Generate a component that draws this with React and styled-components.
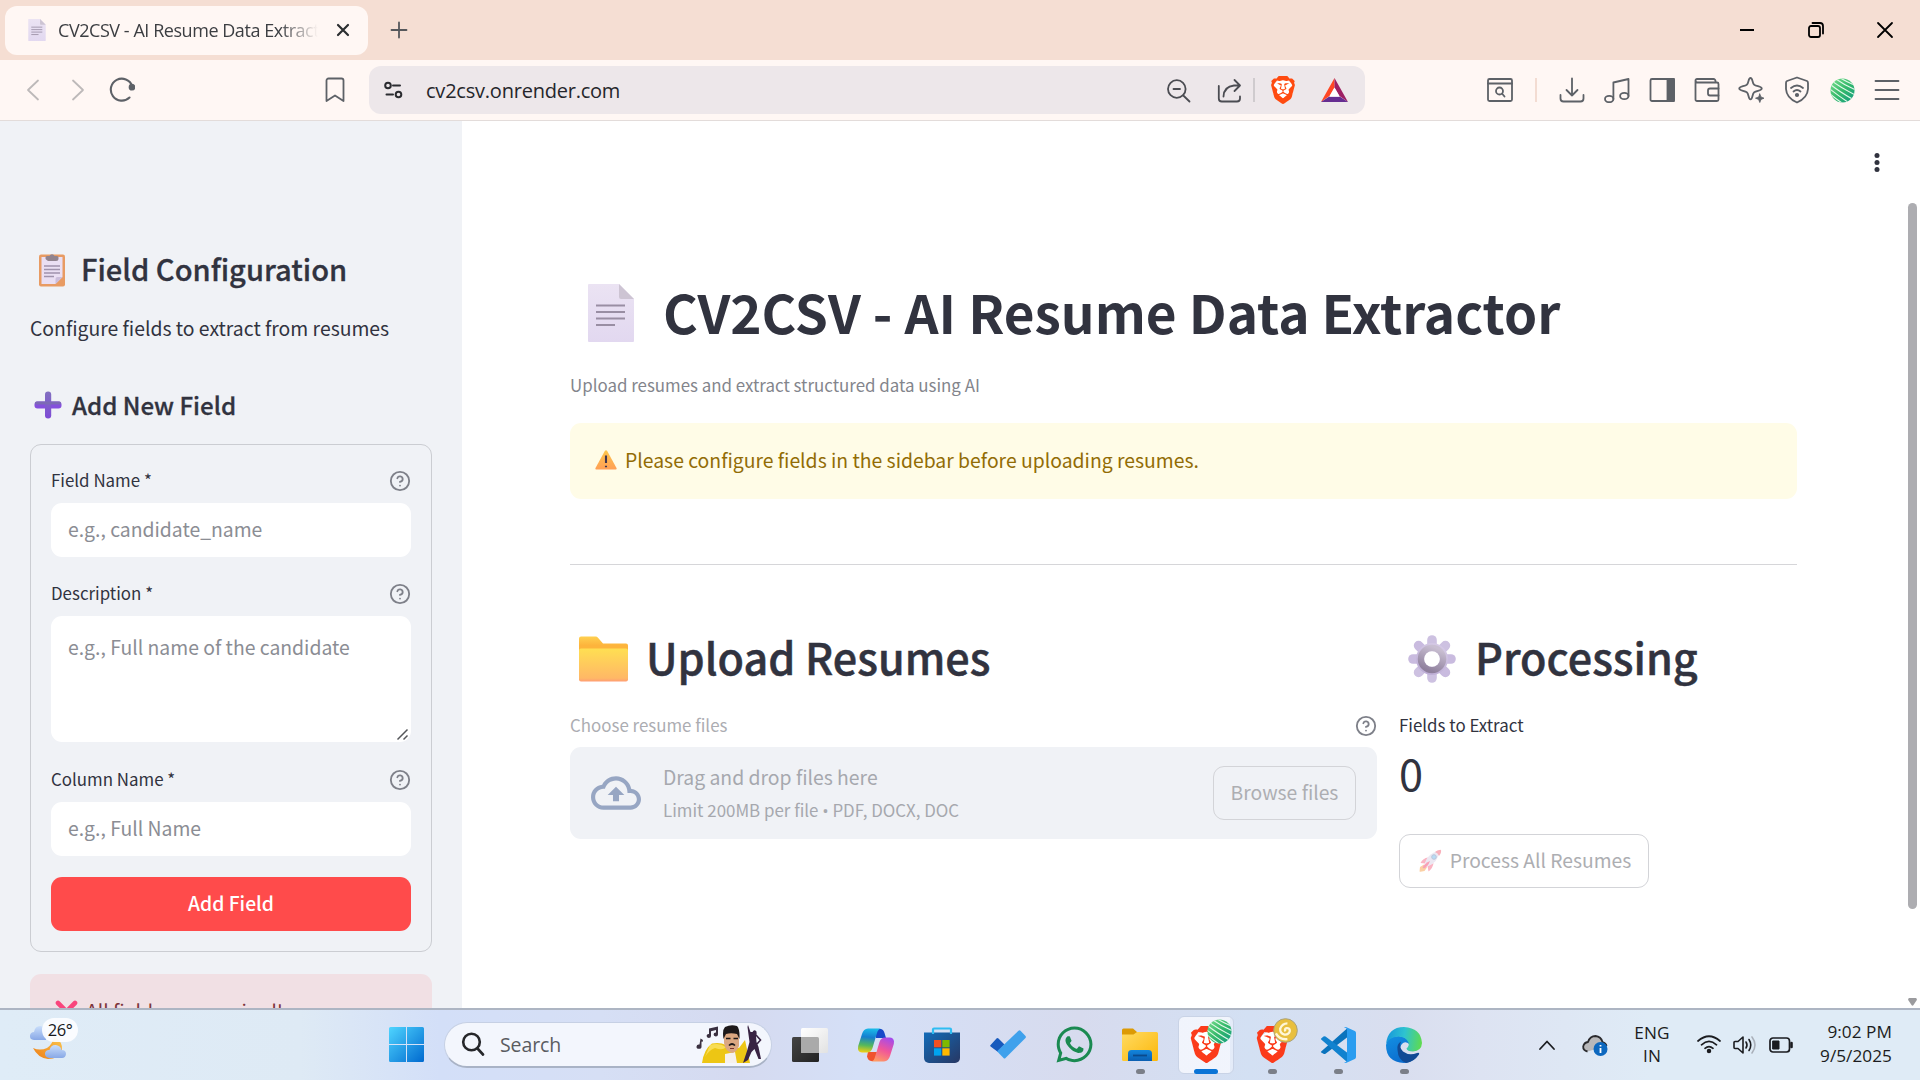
import React from "react";
import styled, { createGlobalStyle, css } from "styled-components";
import { SiBrave } from "react-icons/si";
import { FaWhatsapp } from "react-icons/fa";

const APP_FONT = '"Noto Sans CJK SC", "Noto Sans", sans-serif';
const SHELL_FONT = '"Open Sans", "Noto Sans", sans-serif';

const GlobalStyle = createGlobalStyle`
  * { box-sizing: border-box; }
  html, body { margin: 0; padding: 0; overflow: hidden; background: #fff; }
  svg { display: block; flex: none; }
  button, input, textarea { font: inherit; margin: 0; }
`;

const Screen = styled.div`
  width: 1920px;
  height: 1080px;
  display: flex;
  flex-direction: column;
  overflow: hidden;
  font-family: ${SHELL_FONT};
`;

/* ---------- browser chrome ---------- */

const TabStrip = styled.header`
  height: 60px;
  flex: none;
  display: flex;
  align-items: center;
  background: #f5ded3;
  padding-left: 5px;
`;

const Tab = styled.div`
  width: 363px;
  height: 49px;
  display: flex;
  align-items: center;
  padding: 0 16px 0 23px;
  border-radius: 12px;
  background: #fff7f4;
`;

const TabTitle = styled.span`
  width: 260px;
  margin-left: 12px;
  overflow: hidden;
  white-space: nowrap;
  font-size: 18px;
  letter-spacing: -0.45px;
  line-height: 26px;
  color: #3c3e42;
  mask-image: linear-gradient(90deg, #000 85%, transparent 100%);
`;

const TabClose = styled.span`
  margin-left: 18px;
`;

const NewTab = styled.span`
  margin-left: 22px;
`;

const WindowControls = styled.div`
  display: flex;
  align-items: center;
  margin-left: auto;
  padding-right: 26px;
  gap: 51px;
`;

const Toolbar = styled.nav`
  height: 61px;
  flex: none;
  display: flex;
  align-items: center;
  background: #fff7f4;
  border-bottom: 1px solid #e3dcda;
  padding-left: 18px;
`;

const Slot = styled.span`
  width: ${(p) => p.$w || 30}px;
  height: 30px;
  flex: none;
  display: flex;
  align-items: center;
  justify-content: center;
  margin-left: ${(p) => p.$gap || 0}px;
  color: ${(p) => p.$tone || "#5d6167"};
`;

const AddressBar = styled.div`
  width: 996px;
  height: 48px;
  display: flex;
  align-items: center;
  margin-left: 19px;
  padding: 0 16px 0 9px;
  border-radius: 12px;
  background: #ede7ea;
`;

const Address = styled.span`
  flex: 1;
  margin-left: 18px;
  padding-top: 1px;
  font-size: 20px;
  letter-spacing: -0.22px;
  line-height: 30px;
  color: #25262b;
`;

const Divider = styled.span`
  width: 2px;
  height: 24px;
  margin-left: ${(p) => p.$gap}px;
  background: ${(p) => p.$color};
`;

/* ---------- page ---------- */

const Page = styled.div`
  height: 887px;
  flex: none;
  display: flex;
  overflow: hidden;
  font-family: ${APP_FONT};
  color: #31333f;
`;

const Sidebar = styled.aside`
  width: 462px;
  flex: none;
  background: #f0f2f6;
  padding: 127px 30px 0;
`;

const heading = css`
  display: flex;
  align-items: center;
  margin: 0;
  font-weight: 500;
  white-space: nowrap;
  -webkit-text-stroke: ${(p) => p.$stroke || 0.3}px #31333f;
  svg { -webkit-text-stroke: 0; }
`;

const SideTitle = styled.h2`
  ${heading}
  padding-left: 8px;
  gap: 15px;
  font-size: 29.1px;
  line-height: 40px;
  height: 40px;
  svg { margin-top: 4px; }
`;

const SideText = styled.p`
  margin: 24px 0 0;
  font-size: 19.36px;
  line-height: 32px;
  white-space: nowrap;
`;

const SideSubtitle = styled.h3`
  ${heading}
  margin-top: 43px;
  padding-left: 4px;
  gap: 10px;
  font-size: 24.1px;
  line-height: 36px;
  height: 36px;
`;

const FieldForm = styled.form`
  display: flex;
  flex-direction: column;
  gap: 21px;
  height: 508px;
  margin: 21px 0 0;
  padding: 20px;
  border: 1px solid #cbcdd2;
  border-radius: 11px;
`;

const Field = styled.div`
  display: flex;
  flex-direction: column;
  gap: 8px;
`;

const LabelRow = styled.div`
  display: flex;
  align-items: center;
  justify-content: space-between;
  height: 30px;
  font-size: 16.9px;
  line-height: 30px;
  white-space: nowrap;
  color: ${(p) => (p.$disabled ? "#acadb2" : "#31333f")};
  svg { margin-top: 2px; }
`;

const inputBox = css`
  display: block;
  width: 100%;
  border: 0;
  border-radius: 11px;
  background: #fff;
  font-family: ${APP_FONT};
  font-size: 19.36px;
  color: #31333f;
  &::placeholder { color: #8b8d94; opacity: 1; }
`;

const TextInput = styled.input`
  ${inputBox}
  height: 54px;
  padding: 0 17px 2px;
`;

const TextAreaFrame = styled.div`
  position: relative;
  height: 126px;
  margin-bottom: 1px;
`;

const TextArea = styled.textarea`
  ${inputBox}
  height: 126px;
  padding: 15px 17px;
  line-height: 32px;
  resize: none;
`;

const ResizeGrip = styled.span`
  position: absolute;
  right: 2px;
  bottom: 1px;
`;

const AddButton = styled.button`
  height: 54px;
  flex: none;
  border: 0;
  border-radius: 11px;
  padding: 0 0 2px;
  background: #ff4b4b;
  color: #fff;
  font-size: 19.3px;
  font-weight: 500;
  line-height: 52px;
`;

const Alert = styled.div`
  display: flex;
  align-items: center;
  height: 76px;
  border-radius: 11px;
  font-size: 19.36px;
  line-height: 32px;
  white-space: nowrap;
  margin-top: ${(p) => p.$top}px;
  gap: ${(p) => p.$gap}px;
  padding: 0 0 2px 25px;
  ${(p) =>
    p.$kind === "error"
      ? "background:#f1e0e4;color:#7d353b;"
      : "background:#fffce7;color:#926c05;"}
`;

const Main = styled.main`
  position: relative;
  flex: 1;
  padding: 0 123px 0 108px;
  background: #fff;
`;

const PageMenu = styled.div`
  display: flex;
  justify-content: flex-end;
  height: 82px;
  padding-top: 29px;
  margin-right: -91px;
`;

const Title = styled.h1`
  display: flex;
  align-items: center;
  height: 70px;
  margin: 73px 0 0;
  padding-left: 18px;
  gap: 29px;
  font-size: 53.1px;
  font-weight: 700;
  line-height: 70px;
  white-space: nowrap;
  svg { margin-top: 4px; }
`;

const Caption = styled.p`
  margin: 25px 0 0;
  font-size: 16.9px;
  line-height: 28px;
  color: #83858c;
`;

const Rule = styled.hr`
  height: 1px;
  margin: 65px 0 62px;
  border: 0;
  background: #d6d6d9;
`;

const Columns = styled.div`
  display: grid;
  grid-template-columns: 807px 398px;
  column-gap: 22px;
`;

const SectionTitle = styled.h2`
  ${heading}
  height: 58px;
  margin-bottom: 25px;
  padding-left: ${(p) => p.$inset}px;
  gap: ${(p) => p.$gap}px;
  font-size: 43.1px;
  line-height: 58px;
  svg { margin-top: 6px; }
`;

const Dropzone = styled.section`
  display: flex;
  align-items: center;
  height: 92px;
  margin-top: 7px;
  padding: 0 21px;
  border-radius: 11px;
  background: #f0f2f6;
`;

const DropText = styled.div`
  flex: 1;
  margin-left: 22px;
  color: #a6a8ae;
  font-size: 19.36px;
  line-height: 34px;
`;

const DropHint = styled.div`
  font-size: 16.9px;
  line-height: 32px;
`;

const Bullet = styled.span`
  font-family: "Open Sans", sans-serif;
  font-size: 17px;
  line-height: 1;
`;

const OutlineButton = styled.button`
  display: flex;
  align-items: center;
  justify-content: center;
  gap: 8px;
  width: ${(p) => p.$w}px;
  height: 54px;
  padding: 0 0 2px ${(p) => p.$shift || 0}px;
  border: 1px solid #d3d4d8;
  border-radius: 11px;
  background: transparent;
  color: #adaeb2;
  font-size: 19.3px;
  white-space: nowrap;
`;

const MetricValue = styled.div`
  margin: 5px 0 35px;
  font-size: 43.3px;
  line-height: 54px;
`;

const ScrollTrack = styled.div`
  position: absolute;
  top: 82px;
  right: 3px;
  width: 9px;
  height: 803px;
  display: flex;
  flex-direction: column;
  justify-content: space-between;
`;

const ScrollThumb = styled.div`
  height: 706px;
  border-radius: 5px;
  background: #adadb1;
`;

/* ---------- taskbar ---------- */

const Taskbar = styled.footer`
  height: 72px;
  flex: none;
  display: flex;
  align-items: center;
  border-top: 2px solid #adb5c3;
  padding-bottom: 1px;
  background: linear-gradient(
    90deg,
    #dfecf7 0, #deeaf5 300px, #d3dff8 440px, #d6dff5 600px, #d5daf0 740px,
    #d5e0f7 860px, #d7dbee 1080px, #d3e0f3 1250px, #d9deef 1400px,
    #dde3f2 1480px, #dfebf6 1650px, #dfebf6 1920px
  );
`;

const Weather = styled.div`
  width: 378px;
  padding-left: 28px;
`;

const WeatherBadge = styled.div`
  position: relative;
  width: 52px;
  height: 46px;
  margin-top: -13px;
`;

const Temperature = styled.span`
  position: absolute;
  top: 3px;
  left: 14px;
  width: 36px;
  height: 24px;
  border-radius: 12px;
  background: rgba(252, 253, 255, 0.93);
  text-align: center;
  font-size: 16.5px;
  letter-spacing: -0.5px;
  line-height: 23px;
  color: #16181c;
`;

const SearchBox = styled.div`
  width: 328px;
  height: 46px;
  display: flex;
  align-items: center;
  margin: 0 10px;
  padding: 0 8px 0 16px;
  border: 1px solid #c6d0e4;
  border-bottom: 2px solid #a9b3c6;
  border-radius: 23px;
  background: #f3f6fd;
`;

const SearchText = styled.span`
  flex: 1;
  margin-left: 15px;
  padding-top: 1px;
  font-size: 19.5px;
  letter-spacing: -0.1px;
  line-height: 28px;
  color: #5a5c61;
`;

const Apps = styled.div`
  display: flex;
  gap: 10px;
`;

const AppTile = styled.div`
  position: relative;
  width: 56px;
  height: 58px;
  display: flex;
  align-items: center;
  justify-content: center;
  border-radius: 6px;
  ${(p) =>
    p.$active &&
    css`
      background: linear-gradient(90deg, rgba(246, 248, 254, 0.85) 51px, rgba(232, 238, 250, 0.8) 51px);
      border: 1px solid #c9d3e6;
    `}
  &::after {
    content: "";
    display: ${(p) => (p.$running ? "block" : "none")};
    position: absolute;
    bottom: ${(p) => (p.$active ? -1 : 0)}px;
    left: ${(p) => (p.$active ? 15 : 24)}px;
    width: ${(p) => (p.$active ? 24 : 9)}px;
    height: 5px;
    border-radius: 3px;
    background: ${(p) => (p.$active ? "#0a74d6" : "#7b7f88")};
  }
`;

const ProfileBadge = styled.span`
  position: absolute;
  top: 2px;
  right: ${(p) => (p.$shift ? 1 : 2)}px;
`;

const BraveMark = styled.span`
  display: flex;
  align-items: center;
  justify-content: center;
  width: ${(p) => p.$size}px;
  height: ${(p) => p.$size}px;
  color: ${(p) => p.$color || "#fb3b1b"};
  background: radial-gradient(closest-side, #fff 72%, transparent 74%);
`;

const Tray = styled.div`
  display: flex;
  align-items: center;
  margin-left: auto;
  padding-right: 28px;
  color: #1b1c20;
`;

const TrayText = styled.div`
  width: ${(p) => p.$w}px;
  margin-left: ${(p) => p.$gap}px;
  padding-bottom: 1px;
  text-align: ${(p) => p.$align};
  font-size: 17.2px;
  letter-spacing: ${(p) => p.$track || 0}px;
  line-height: ${(p) => p.$lh}px;
  white-space: nowrap;
`;

const TrayIcon = styled.span`
  margin-left: ${(p) => p.$gap}px;
`;

/* ---------- drawings ---------- */

const Line = ({ w = 26, h = w, vb = "0 0 26 26", sw = 1.8, children }) => (
  <svg width={w} height={h} viewBox={vb} fill="none" stroke="currentColor" strokeWidth={sw} strokeLinecap="round" strokeLinejoin="round">
    {children}
  </svg>
);

const Help = () => (
  <Line w={22} vb="0 0 24 24" sw={2}>
    <g stroke="#7e8089">
      <circle cx="12" cy="12" r="10" />
      <path d="M9.09 9a3 3 0 0 1 5.83 1c0 2-3 3-3 3M12 17h.01" />
    </g>
  </Line>
);

const DocIcon = ({ w, h }) => (
  <svg width={w} height={h} viewBox="0 0 46 58">
    <defs>
      <linearGradient id="docFill" x1="0" y1="0" x2="0" y2="1">
        <stop offset="0" stopColor="#ebe3f3" />
        <stop offset="1" stopColor="#e2d8f0" />
      </linearGradient>
    </defs>
    <path d="M1 0H31L46 15V57a1 1 0 0 1-1 1H1a1 1 0 0 1-1-1V1a1 1 0 0 1 1-1Z" fill="url(#docFill)" />
    <path d="M31 0L46 15H33a2 2 0 0 1-2-2Z" fill="#cdc4d3" />
    <path d="M8 21.5H37M8 28H37M8 34.5H37M8 41H27" stroke="#998ea3" strokeWidth="2.2" />
  </svg>
);

const Clipboard = () => (
  <svg width="28" height="34" viewBox="0 0 28 34">
    <rect x="1" y="1.5" width="26" height="32" rx="2" fill="#e89b63" />
    <path d="M3.5 4h21v20l-7 7h-14Z" fill="#eadff3" />
    <path d="M24.500 24l-7 7v-5a2 2 0 0 1 2-2Z" fill="#cbbddb" />
    <path d="M8 6.500a1.500 1.500 0 0 1-.5-1V4.500a1.500 1.500 0 0 1 1.500-1.500h2.500a2.700 2.700 0 0 1 5 0H19a1.500 1.500 0 0 1 1.500 1.500v1a2.500 2.500 0 0 1-2.500 2.500h-8Z" fill="#91848f" />
    <path d="M6 13H22M6 16.500H22M6 20H22M6 23.500H16" stroke="#a093ad" strokeWidth="1.3" />
  </svg>
);

const PlusMark = () => (
  <svg width="28" height="28" viewBox="0 0 28 28">
    <defs>
      <linearGradient id="plusFill" x1="0" y1="0" x2="0" y2="1">
        <stop offset="0" stopColor="#8270c0" />
        <stop offset="1" stopColor="#7e4bd6" />
      </linearGradient>
    </defs>
    <rect x="0.500" y="10.500" width="27" height="7" rx="3" fill="#8550dd" />
    <rect x="11" y="0.500" width="6.200" height="27" rx="3" fill="url(#plusFill)" />
    <rect x="1" y="10.500" width="26" height="3" rx="1.500" fill="#7d6ab5" />
  </svg>
);

const Cross = () => (
  <svg width="23" height="23" viewBox="0 0 23 23">
    <path d="M3 3L20 20M20 3L3 20" stroke="#f9457c" strokeWidth="4.600" strokeLinecap="round" />
  </svg>
);

const Warning = () => (
  <svg width="22" height="20" viewBox="0 0 22 20">
    <defs>
      <linearGradient id="warnFill" x1="0" y1="0" x2="0" y2="1">
        <stop offset="0" stopColor="#fdc64c" />
        <stop offset="1" stopColor="#ff9f55" />
      </linearGradient>
    </defs>
    <path d="M9.800 0.900Q11-.4 12.200.9L21.500 18Q22 19.500 20.800 19.500H1.200Q0 19.500.5 18Z" fill="url(#warnFill)" />
    <path d="M11 5.500V13M11 15.800V17.300" stroke="#40354f" strokeWidth="2.100" />
  </svg>
);

const Folder = () => (
  <svg width="49" height="46" viewBox="0 0 49 46">
    <defs>
      <linearGradient id="folderFront" x1="0" y1="0" x2="0" y2="1">
        <stop offset="0" stopColor="#ffdf52" />
        <stop offset=".9" stopColor="#ffb866" />
        <stop offset="1" stopColor="#ff9d73" />
      </linearGradient>
      <linearGradient id="folderBack" x1="0" y1="0" x2="0" y2=".3">
        <stop offset="0" stopColor="#ffd050" />
        <stop offset="1" stopColor="#fdb43c" />
      </linearGradient>
    </defs>
    <path d="M0 2.500A2 2 0 0 1 2 .5H16.500a3 3 0 0 1 2.500 1.200L24 7.500H47a2 2 0 0 1 2 2V30H0Z" fill="url(#folderBack)" />
    <rect x="0" y="12.500" width="49" height="33" rx="2" fill="url(#folderFront)" />
  </svg>
);

const Gear = () => (
  <svg width="48" height="48" viewBox="0 0 48 48">
    <defs>
      <linearGradient id="gearFill" gradientUnits="userSpaceOnUse" x1="34" y1="0" x2="14" y2="48">
        <stop offset="0" stopColor="#dcd2ea" />
        <stop offset="1" stopColor="#b6a5d1" />
      </linearGradient>
      <linearGradient id="gearRing" x1=".7" y1="0" x2=".3" y2="1">
        <stop offset="0" stopColor="#c9bfd2" />
        <stop offset="1" stopColor="#8f809d" />
      </linearGradient>
    </defs>
    {[0, 45, 90, 135].map((a) => (
      <path key={a} d="M24 5V43" stroke={a > 45 ? "#c9bbdf" : "#cdc1e1"} strokeWidth="9.600" strokeLinecap="round" transform={`rotate(${a} 24 24)`} />
    ))}
    <circle cx="24" cy="24" r="16" fill="url(#gearFill)" />
    <circle cx="24" cy="24" r="11" fill="none" stroke="url(#gearRing)" strokeWidth="6.500" />
    <circle cx="24" cy="24" r="7.800" fill="#fff" />
  </svg>
);

const Rocket = () => (
  <svg width="23" height="23" viewBox="0 0 23 23">
    <path d="M1 18L5 15.500 8 18.500 5.500 22Q1 23 .5 22.500Z" fill="#fbd0a4" />
    <path d="M9 8.500Q4 9 1.500 14L6 14.500ZM14.500 14Q14 19 9.500 22.500L8.500 17Z" fill="#fbb4c3" />
    <path d="M5.500 16.500Q7 5 20.500 1.500 19.500 14 7.500 18Z" fill="#ece8f2" />
    <path d="M16 3Q18 1 21.500.8 22.500 1 22 3.200 21.500 5.500 20 7 19 4 16 3Z" fill="#f9b0ba" />
    <path d="M3.500 18.500Q5.500 14.500 11 12 9 17.500 5 19.500Z" fill="#f8a0b6" />
    <circle cx="15" cy="8" r="2.300" fill="#b8dcf5" stroke="#b9c6da" />
  </svg>
);

const Cloud = () => (
  <svg width="50" height="50" viewBox="0 0 24 24" fill="#97a6c3">
    <path d="M19.350 10.040A7.490 7.490 0 0 0 12 4C9.110 4 6.600 5.640 5.350 8.040A5.994 5.994 0 0 0 0 14c0 3.310 2.690 6 6 6h13c2.760 0 5-2.240 5-5 0-2.640-2.050-4.780-4.650-4.960zM19 18H6c-2.210 0-4-1.790-4-4s1.790-4 4-4h.71C7.370 7.690 9.480 6 12 6c3.040 0 5.500 2.460 5.500 5.500v.5H19c1.660 0 3 1.340 3 3s-1.340 3-3 3z" />
    <path d="M8 13h2.550v3h2.900v-3H16l-4-4z" />
  </svg>
);

const StripedBall = ({ size }) => (
  <svg width={size} height={size} viewBox="0 0 26 26">
    <defs>
      <linearGradient id="greenBall" x1="0" y1="0" x2="1" y2="1">
        <stop offset="0" stopColor="#7be08d" />
        <stop offset=".5" stopColor="#35b96b" />
        <stop offset="1" stopColor="#119a80" />
      </linearGradient>
      <clipPath id="ballClip"><circle cx="13" cy="13" r="12.500" /></clipPath>
    </defs>
    <circle cx="13" cy="13" r="12.500" fill="url(#greenBall)" />
    <g clipPath="url(#ballClip)" stroke="#e2f8e8" strokeWidth="1.200" fill="none">
      <path d="M9-1Q17 4 27 8M3-1Q14 7 28 13M-1 1Q11 10 27 18M-2 5Q9 14 25 23M-2 10Q8 18 20 26M-2 15Q5 21 14 27M-2 20Q2 23 8 27" />
    </g>
  </svg>
);

const SwirlBall = () => (
  <svg width="25" height="25" viewBox="0 0 26 26">
    <circle cx="13" cy="13" r="12.300" fill="#e8bf3e" stroke="#a8a07c" />
    <path d="M13 14Q11.500 11.500 14 10.500 17.500 10 17.500 13.500 16.500 17.500 12 17.200 7 16 7.500 11 9.500 5.500 15 5.500M3 16Q7 23 15 22" fill="none" stroke="#fff7d8" strokeWidth="2.400" />
  </svg>
);

const Triangle = () => (
  <svg width="27" height="24" viewBox="0 0 27 24">
    <path d="M13.500 0V9.500L8.500 18 0 24Z" fill="#ff4724" />
    <path d="M13.500 0L27 24 18.500 18 13.500 9.500Z" fill="#9e1f63" />
    <path d="M0 24L8.300 18.500H18.700L27 24Z" fill="#662d91" />
    <path d="M13.500 9.500L18.700 18.800H8.300Z" fill="#fff" />
  </svg>
);

const WeatherArt = () => (
  <svg width="40" height="46" viewBox="0 0 40 46">
    <defs>
      <linearGradient id="cloudFill" x1="0" y1="0" x2="0" y2="1">
        <stop offset="0" stopColor="#c9defb" />
        <stop offset="1" stopColor="#88a8e6" />
      </linearGradient>
      <linearGradient id="moonFill" x1="0" y1="1" x2="1" y2="0">
        <stop offset="0" stopColor="#ee7d16" />
        <stop offset="1" stopColor="#fbc94f" />
      </linearGradient>
    </defs>
    <path d="M6 25Q1.500 24.500 2 20.500 2.500 17 6 17 7 11 12 11 17 11 18 17V25Z" fill="url(#cloudFill)" />
    <path d="M26 21Q35 27 34 35 31 44 20 44 10 43 5 33 12 36 19 33 25 29 26 21Z" fill="url(#moonFill)" />
    <path d="M21 43Q16.500 42 17 38 18 34.500 21.500 35 23 29.500 28 30 33 31 33.500 35 38 35 38 39 37.500 43 34 43Z" fill="url(#cloudFill)" />
  </svg>
);

const WindowsLogo = () => (
  <svg width="35" height="35" viewBox="0 0 35 35">
    <defs>
      <linearGradient id="winFill" x1="0" y1="0" x2="1" y2="1">
        <stop offset="0" stopColor="#4fd5ff" />
        <stop offset="1" stopColor="#0069cf" />
      </linearGradient>
    </defs>
    <path d="M1.500 0H17V17H0V1.500A1.500 1.500 0 0 1 1.500 0ZM18 0H33.500A1.500 1.500 0 0 1 35 1.500V17H18ZM0 18H17V35H1.500A1.500 1.500 0 0 1 0 33.500ZM18 18H35V33.500A1.500 1.500 0 0 1 33.500 35H18Z" fill="url(#winFill)" />
  </svg>
);

const SearchArt = () => (
  <svg width="68" height="38" viewBox="0 0 68 38">
    <g fill="#3a3040">
      <path d="M14 3.500L23 1.500V9.500A2.200 2 0 1 1 21 7.500V5L16 6.200V11A2.200 2 0 1 1 14 9Z" />
      <path d="M5.500 13.500L8 15 7.500 17 6.500 16.500V21.500A2.500 2.200 0 1 1 4.500 19.500Z" />
    </g>
    <path d="M7 38Q9 24 17 18.500 25 17 31 20L44 23 50 15 55 38Z" fill="#edc614" />
    <path d="M15 20Q24 17 31 22 28 26 20 23 14 25 10 32Z" fill="#f8dd55" />
    <path d="M30 29L40 27 42 38H30Z" fill="#f5f0ec" />
    <path d="M29 9Q29 3 37 3 44 3 44 10V21Q41 28 37 28 30 26 29 18Z" fill="#dba781" />
    <path d="M28.500 14Q27 5 30 2 36-1 42 1 45 4 44.500 14L42 9Q36 7.500 31 9Z" fill="#1d191a" />
    <path d="M31 13.500H35.500M38.500 13.500H43M34 20.500Q37 17.500 40 20.500" stroke="#1d191a" strokeWidth="1.700" fill="none" />
    <path d="M35 23.500H39" stroke="#7e3430" />
    <path d="M53 0L55.500 7 57.500 7Q59 4 61.500 6.500 62 9 61 11L61.500 17 63.500 22 66 34 63.500 34 59.500 24 56.500 27 53 35 48 38 52 26 54.500 17 52.500 2Z" fill="#382343" />
    <path d="M61 10L65.500 15 62 19" stroke="#382343" strokeWidth="1.600" fill="none" />
  </svg>
);

const TaskView = () => (
  <svg width="36" height="36" viewBox="0 0 36 36">
    <defs>
      <linearGradient id="tvDark" x1="0" y1="0" x2="1" y2="1">
        <stop offset="0" stopColor="#444" />
        <stop offset="1" stopColor="#222" />
      </linearGradient>
      <linearGradient id="tvLight" x1="0" y1="0" x2="1" y2="1">
        <stop offset="0" stopColor="#fff" />
        <stop offset="1" stopColor="#e2e2e2" />
      </linearGradient>
    </defs>
    <rect x="0" y="10" width="27" height="25" rx="1.500" fill="url(#tvDark)" />
    <rect x="9" y="1" width="27" height="25" rx="1.500" fill="url(#tvLight)" />
    <path d="M9 10H25.500a1.500 1.500 0 0 1 1.500 1.500V26H10.500A1.500 1.500 0 0 1 9 24.500Z" fill="#aaa" />
  </svg>
);

const Copilot = () => (
  <svg width="38" height="34" viewBox="0 0 38 34">
    <defs>
      <linearGradient id="cpA" x1=".4" y1="0" x2=".3" y2="1">
        <stop offset="0" stopColor="#1bb9e8" />
        <stop offset=".35" stopColor="#157fd0" />
        <stop offset=".7" stopColor="#55b85c" />
        <stop offset="1" stopColor="#f2cf12" />
      </linearGradient>
      <linearGradient id="cpB" x1=".7" y1="0" x2=".3" y2="1">
        <stop offset="0" stopColor="#a64bea" />
        <stop offset=".5" stopColor="#f0569a" />
        <stop offset="1" stopColor="#ff9a63" />
      </linearGradient>
    </defs>
    <path d="M19 1H24Q26.500 1.500 27.500 5L29 10H19Z" fill="#1749c9" />
    <path d="M11 24H20L18 33H14Q11 32.500 10 28.500Z" fill="#f0532d" />
    <path d="M11 0.500H24Q21 1 20 5L15.500 20Q14 24.500 10 24.500H5Q0 24 1.200 18L5 6Q6.500.8 11 .5Z" fill="url(#cpA)" />
    <path d="M27 33.500H14Q17 33 18 29L22.500 14Q24 9.500 28 9.500H33Q38 10 36.800 16L33 28Q31.500 33.200 27 33.500Z" fill="url(#cpB)" />
  </svg>
);

const Store = () => (
  <svg width="36" height="36" viewBox="0 0 36 36">
    <defs>
      <linearGradient id="storeFill" x1="0" y1="0" x2="1" y2="1">
        <stop offset="0" stopColor="#126bb8" />
        <stop offset="1" stopColor="#273763" />
      </linearGradient>
    </defs>
    <path d="M0 5.500H36V31a5 5 0 0 1-5 5H5a5 5 0 0 1-5-5Z" fill="url(#storeFill)" />
    <path d="M9 7V2.500A1 1 0 0 1 10 1.500H26A1 1 0 0 1 27 2.500V7" fill="none" stroke="#2fbdf2" strokeWidth="2.200" />
    <path d="M10 13h7.300v7.300H10z" fill="#f25022" />
    <path d="M18.300 13h7.300v7.300h-7.300z" fill="#7fba00" />
    <path d="M10 21.300h7.300v7.300H10z" fill="#00a4ef" />
    <path d="M18.300 21.300h7.300v7.300h-7.300z" fill="#ffb900" />
  </svg>
);

const Todo = () => (
  <svg width="36" height="29" viewBox="0 0 36 29">
    <path d="M0.600 15L6.500 8.500Q7.300 7.500 8.500 8.500L14.500 14.500 8 22 .6 16.500Q-.3 15.800.6 15Z" fill="#185abd" />
    <path d="M7 21.200L28.500.7Q29.500 0 30.500.7L35.500 6Q36.300 7 35.500 8L15.500 28Q14.500 29 13.500 28Z" fill="#3fa1ec" />
  </svg>
);

const Explorer = () => (
  <svg width="36" height="34" viewBox="0 0 36 34">
    <defs>
      <linearGradient id="exFill" x1="0" y1="0" x2="1" y2="1">
        <stop offset="0" stopColor="#ffdb62" />
        <stop offset="1" stopColor="#fcb70a" />
      </linearGradient>
      <linearGradient id="exBlue" x1="0" y1="0" x2="0" y2="1">
        <stop offset="0" stopColor="#1285dc" />
        <stop offset="1" stopColor="#0b5fb2" />
      </linearGradient>
    </defs>
    <path d="M0 2A1.500 1.500 0 0 1 1.500.5H11L15 4V9H0Z" fill="#dc9a05" />
    <path d="M0 6.500H11.500L15 4H34.500A1.500 1.500 0 0 1 36 5.500V31.500A1.500 1.500 0 0 1 34.500 33H1.500A1.500 1.500 0 0 1 0 31.500Z" fill="url(#exFill)" />
    <path d="M6 33V25.500A3.500 3.500 0 0 1 9.500 22H26.500A3.500 3.500 0 0 1 30 25.500V33Z" fill="url(#exBlue)" />
    <path d="M11 27.500H25" stroke="#0a4a8c" strokeWidth="1.800" />
  </svg>
);

const VsCode = () => (
  <svg width="36" height="36" viewBox="0 0 36 36">
    <path d="M1.200 24.500L27 1.500V10.500L5.500 26.700Q4.500 27.500 3.500 26.700L1.200 25.500Q.5 25 1.200 24.500Z" fill="#0a73bd" />
    <path d="M1.200 11.500L3.500 9.500Q4.500 8.800 5.500 9.500L27 25.500V35L1.200 12.500Q.5 12 1.200 11.500Z" fill="#1182cf" />
    <path d="M26.500.2L34.800 4Q36 4.600 36 6V30Q36 31.400 34.800 32L26.500 35.800Q25 36.300 24 35 27 36 27 32V4Q27 0 24 1 25-.3 26.500.2Z" fill="#2a9df0" />
  </svg>
);

const Edge = () => (
  <svg width="36" height="36" viewBox="0 0 36 36">
    <defs>
      <linearGradient id="edTop" x1="0" y1=".4" x2="1" y2=".5">
        <stop offset="0" stopColor="#1797dc" />
        <stop offset=".5" stopColor="#2ec3d0" />
        <stop offset="1" stopColor="#5edb50" />
      </linearGradient>
      <linearGradient id="edLow" x1="0" y1="0" x2=".5" y2="1">
        <stop offset="0" stopColor="#1390e2" />
        <stop offset="1" stopColor="#0b6cce" />
      </linearGradient>
    </defs>
    <path d="M0 18Q1 9 13 9 23 10 24 18 21 14 17 16 12 20 16 26 21 32 31 29 26 36 18 36 0 35 0 18Z" fill="url(#edLow)" />
    <path d="M0 17Q2 0 18 0 35 1 36 16 35.500 24 27 24.500 21 24.500 20.500 21.500 23.500 19 22.500 15.500 20 9.500 12 9.500 3 10 0 17Z" fill="url(#edTop)" />
    <path d="M11.500 23Q10.500 17 15 14.500 12.500 20 17 24.500 23 29 31 26 34 25 33 27.500 28 35 20 36 12 33 11.500 23Z" fill="#114a94" />
  </svg>
);

const BrowserTray = () => (
  <>
    <Slot $gap={120}>
      <Line w={28} h={26} vb="0 0 28 26">
        <rect x="2" y="2" width="24" height="22" rx="1.500" />
        <path d="M2 6.500H26" />
        <circle cx="13.500" cy="14" r="3.500" />
        <path d="M16.200 16.700L18.500 19.500" />
      </Line>
    </Slot>
    <Divider $gap={20} $color="#f3dcd2" />
    <Slot $gap={20}>
      <Line><path d="M13 1.500V18.500M7.500 13L13 18.500 18.500 13M1.500 18V21.500A3 3 0 0 0 4.500 24.500H21.500A3 3 0 0 0 24.500 21.500V18" /></Line>
    </Slot>
    <Slot $gap={15}>
      <Line>
        <ellipse cx="5.200" cy="22" rx="4.200" ry="3.200" />
        <ellipse cx="20.300" cy="19" rx="4.200" ry="3.200" />
        <path d="M9.400 22V5.500L24.500 2V19" />
      </Line>
    </Slot>
    <Slot $gap={15}>
      <Line>
        <rect x="1.500" y="2" width="23.500" height="22" rx="1.500" />
        <path d="M18.500 2H25V24H18.500Z" fill="currentColor" />
      </Line>
    </Slot>
    <Slot $gap={15}>
      <Line>
        <path d="M21.500 5.500V4A2 2 0 0 0 19.500 2H3A1.500 1.500 0 0 0 1.500 3.500 2 2 0 0 0 3.500 5.500H23A1.500 1.500 0 0 1 24.500 7V22.500A1.500 1.500 0 0 1 23 24H3A1.500 1.500 0 0 1 1.500 22.500V3.500" />
        <path d="M24.500 11.500H16A2 2 0 0 0 14 13.500V16.500A2 2 0 0 0 16 18.500H24.500" />
      </Line>
    </Slot>
    <Slot $gap={15}>
      <Line w={28} h={28} vb="0 0 28 28">
        <path d="M12.500 2C13.500 2 14 3 14.500 5 15.300 8.500 16 9.200 20 10.200 25 11.600 25 13.500 20 14.800 16 15.800 15.300 16.500 14.500 20 13.500 24.500 11.500 24.500 10.500 20 9.700 16.500 9 15.800 5 14.800 0 13.500 0 11.600 5 10.200 9 9.200 9.700 8.500 10.500 5 11 3 11.500 2 12.500 2Z" />
        <path d="M21.800 18L23 21 26 22.200 23 23.400 21.800 26.500 20.600 23.400 17.500 22.200 20.600 21Z" fill="currentColor" strokeWidth=".8" />
      </Line>
    </Slot>
    <Slot $gap={15}>
      <Line w={26} h={28} vb="0 0 26 28">
        <path d="M13 1.500L23 5Q24 5.500 24 7V13Q23.500 22 13 26.500 2.500 22 2 13V7Q2 5.500 3 5Z" />
        <path d="M7 12Q13 7 19 12M9.500 15.500Q13 12.500 16.500 15.500" />
        <circle cx="13" cy="19" r="1.200" fill="currentColor" />
      </Line>
    </Slot>
    <Slot $gap={15}><StripedBall size={25} /></Slot>
    <Slot $gap={15}>
      <Line><path d="M1.500 4H24.500M1.500 13H24.500M1.500 22H24.500" /></Line>
    </Slot>
  </>
);

const FieldRow = ({ label, children }) => (
  <Field>
    <LabelRow>{label}<Help /></LabelRow>
    {children}
  </Field>
);

export default function App() {
  return (
    <Screen>
      <GlobalStyle />
      <TabStrip>
        <Tab>
          <DocIcon w={18} h={22} />
          <TabTitle>CV2CSV - AI Resume Data Extractor</TabTitle>
          <TabClose>
            <Line w={14} vb="0 0 14 14" sw={2.2}><path d="M2 2L12 12M12 2L2 12" stroke="#2c2e31" /></Line>
          </TabClose>
        </Tab>
        <NewTab>
          <Line w={18} vb="0 0 18 18"><path d="M9 1.500V16.500M1.500 9H16.500" stroke="#55575b" /></Line>
        </NewTab>
        <WindowControls>
          <Line w={18} vb="0 0 18 18" sw={2}><path d="M2 9H16" stroke="#000" strokeLinecap="butt" /></Line>
          <Line w={18} vb="0 0 18 18">
            <g stroke="#000">
              <rect x="2" y="5" width="11" height="11" rx="2" />
              <path d="M5.500 2H13A3 3 0 0 1 16 5V12.500" />
            </g>
          </Line>
          <Line w={18} vb="0 0 18 18"><path d="M2 2L16 16M16 2L2 16" stroke="#000" /></Line>
        </WindowControls>
      </TabStrip>

      <Toolbar>
        <Slot $tone="#bdb9b9"><Line w={14} h={22} vb="0 0 14 22"><path d="M12 1.500L2 11 12 20.500" /></Line></Slot>
        <Slot $gap={15} $tone="#bdb9b9"><Line w={14} h={22} vb="0 0 14 22"><path d="M2 1.500L12 11 2 20.500" /></Line></Slot>
        <Slot $gap={14}>
          <Line sw={2.1}>
            <path d="M20.500 20.500A11 11 0 1 1 23.200 9" />
            <circle cx="23" cy="10.200" r="2.300" fill="currentColor" />
          </Line>
        </Slot>
        <Slot $gap={183}><Line w={20} h={26} vb="0 0 20 26"><path d="M1.500 24V3.500A2 2 0 0 1 3.500 1.500H16.500A2 2 0 0 1 18.500 3.500V24L10 18.500Z" /></Line></Slot>
        <AddressBar>
          <Slot $tone="#2b2c30">
            <Line w={20} h={18} vb="0 0 20 18" sw={2}>
              <circle cx="5" cy="4.500" r="2.800" />
              <path d="M10 4.500H17M3.500 13.500H10" />
              <circle cx="15.500" cy="13.500" r="2.800" />
            </Line>
          </Slot>
          <Address>cv2csv.onrender.com</Address>
          <Slot $tone="#4b4c52">
            <Line w={25} vb="0 0 25 25">
              <circle cx="10.800" cy="11" r="8.800" />
              <path d="M7.500 11H14M17.300 17.500L23.500 23.500" />
            </Line>
          </Slot>
          <Slot $gap={21} $tone="#4b4c52">
            <Line w={25} vb="0 0 25 25">
              <path d="M1.800 8V20.500A3 3 0 0 0 4.800 23.500H20A3 3 0 0 0 23 20.500V18.500" />
              <path d="M17.500 2L23 7.500 17.500 13M23 7.500H17Q7 8.500 6.500 18.500" />
            </Line>
          </Slot>
          <Divider $gap={9} $color="#cfcbce" />
          <Slot $gap={13}><BraveMark $size={28} $color="#ff4b10"><SiBrave size={28} /></BraveMark></Slot>
          <Slot $gap={21}><Triangle /></Slot>
        </AddressBar>
        <BrowserTray />
      </Toolbar>

      <Page>
        <Sidebar>
          <SideTitle><Clipboard />Field Configuration</SideTitle>
          <SideText>Configure fields to extract from resumes</SideText>
          <SideSubtitle><PlusMark />Add New Field</SideSubtitle>
          <FieldForm>
            <FieldRow label="Field Name *"><TextInput placeholder="e.g., candidate_name" /></FieldRow>
            <FieldRow label="Description *">
              <TextAreaFrame>
                <TextArea placeholder="e.g., Full name of the candidate" />
                <ResizeGrip>
                  <svg width="13" height="13" viewBox="0 0 13 13"><path d="M1.500 11.500L11.500 1.500M7.500 11.500L11.500 7.500" stroke="#55565a" strokeWidth="1.500" /></svg>
                </ResizeGrip>
              </TextAreaFrame>
            </FieldRow>
            <FieldRow label="Column Name *"><TextInput placeholder="e.g., Full Name" /></FieldRow>
            <AddButton type="button">Add Field</AddButton>
          </FieldForm>
          <Alert $kind="error" $top={22} $gap={8}><Cross />All fields are required!</Alert>
        </Sidebar>

        <Main>
          <PageMenu>
            <svg width="22" height="26" viewBox="0 0 22 26" fill="#31333f">
              <circle cx="11" cy="5.500" r="2.500" /><circle cx="11" cy="12.500" r="2.500" /><circle cx="11" cy="19.500" r="2.500" />
            </svg>
          </PageMenu>
          <Title><DocIcon w={46} h={58} />CV2CSV - AI Resume Data Extractor</Title>
          <Caption>Upload resumes and extract structured data using AI</Caption>
          <Alert $top={24} $gap={8}><Warning />Please configure fields in the sidebar before uploading resumes.</Alert>
          <Rule />
          <Columns>
            <div>
              <SectionTitle $inset={9} $gap={18} $stroke={0.5}><Folder />Upload Resumes</SectionTitle>
              <LabelRow $disabled>Choose resume files<Help /></LabelRow>
              <Dropzone>
                <Cloud />
                <DropText>
                  Drag and drop files here
                  <DropHint>Limit 200MB per file <Bullet>•</Bullet> PDF, DOCX, DOC</DropHint>
                </DropText>
                <OutlineButton type="button" $w={143}>Browse files</OutlineButton>
              </Dropzone>
            </div>
            <div>
              <SectionTitle $inset={9} $gap={19} $stroke={0.5}><Gear />Processing</SectionTitle>
              <LabelRow>Fields to Extract</LabelRow>
              <MetricValue>0</MetricValue>
              <OutlineButton type="button" $w={250} $shift={2}><Rocket />Process All Resumes</OutlineButton>
            </div>
          </Columns>
          <ScrollTrack>
            <ScrollThumb />
            <svg width="9" height="8" viewBox="0 0 9 8"><path d="M1 0H8Q9.500 1 8.500 2.500L5.500 7Q4.500 8.500 3.500 7L.5 2.500Q-.5 1 1 0Z" fill="#9b9b9e" /></svg>
          </ScrollTrack>
        </Main>
      </Page>

      <Taskbar>
        <Weather>
          <WeatherBadge>
            <WeatherArt />
            <Temperature>26°</Temperature>
          </WeatherBadge>
        </Weather>
        <Slot $w={56}><WindowsLogo /></Slot>
        <SearchBox>
          <Line w={24} vb="0 0 24 24" sw={2.6}>
            <g stroke="#26272b"><circle cx="10.500" cy="10" r="8.300" /><path d="M16.500 16.500L22 22.500" /></g>
          </Line>
          <SearchText>Search</SearchText>
          <SearchArt />
        </SearchBox>
        <Apps>
          <AppTile><TaskView /></AppTile>
          <AppTile><Copilot /></AppTile>
          <AppTile><Store /></AppTile>
          <AppTile><Todo /></AppTile>
          <AppTile><FaWhatsapp size={41} color="#1a8a51" /></AppTile>
          <AppTile $running><Explorer /></AppTile>
          <AppTile $running $active>
            <BraveMark $size={37}><SiBrave size={37} /></BraveMark>
            <ProfileBadge $shift><StripedBall size={25} /></ProfileBadge>
          </AppTile>
          <AppTile $running>
            <BraveMark $size={37}><SiBrave size={37} /></BraveMark>
            <ProfileBadge><SwirlBall /></ProfileBadge>
          </AppTile>
          <AppTile $running><VsCode /></AppTile>
          <AppTile $running><Edge /></AppTile>
        </Apps>
        <Tray>
          <Line w={24} h={12} vb="0 0 24 12"><path d="M5 10L12 2.500 19 10" /></Line>
          <TrayIcon $gap={23}>
            <svg width="26" height="24" viewBox="0 0 26 24">
              <path d="M5.500 18.500Q1 17.500 1.200 13.500 2 9.500 6 9 8 3 13.500 3 19 3.500 20.500 9 24 10 24.500 13" fill="#b8b8ba" stroke="#2a2a2d" strokeWidth="1.800" />
              <circle cx="18.500" cy="16" r="7" fill="#0d68bf" />
              <path d="M18.500 15V20M18.500 12V13.500" stroke="#fff" strokeWidth="1.800" />
            </svg>
          </TrayIcon>
          <TrayText $w={40} $gap={24} $align="center" $lh={23} $track={0.2}>ENG<br />IN</TrayText>
          <TrayIcon $gap={25}>
            <Line w={24} h={19} vb="0 0 24 19" sw={1.700}>
              <path d="M1 6Q12-3.500 23 6M4.500 9.800Q12 3 19.500 9.800M8 13.300Q12 9.800 16 13.300" />
              <circle cx="12" cy="16" r="1.400" fill="currentColor" />
            </Line>
          </TrayIcon>
          <TrayIcon $gap={12}>
            <Line w={24} h={20} vb="0 0 24 20" sw={1.600}>
              <path d="M1 7.500A1 1 0 0 1 2 6.500H5L10 2V18L5 13.500H2A1 1 0 0 1 1 12.500ZM13 7Q15 10 13 13M16 4.500Q19.500 10 16 15.500" />
              <path d="M19 2Q25 10 19 18" stroke="#aab0ba" />
            </Line>
          </TrayIcon>
          <TrayIcon $gap={12}>
            <Line w={24} h={16} vb="0 0 24 16" sw={1.700}>
              <rect x="1" y="1" width="19.500" height="14" rx="3" />
              <path d="M4 4H10V12H4Z" fill="currentColor" strokeWidth="1" />
              <path d="M22.500 6V10" strokeWidth="2.600" />
            </Line>
          </TrayIcon>
          <TrayText $w={99} $gap={0} $align="right" $lh={24} $track={0.05}>9:02 PM<br />9/5/2025</TrayText>
        </Tray>
      </Taskbar>
    </Screen>
  );
}
